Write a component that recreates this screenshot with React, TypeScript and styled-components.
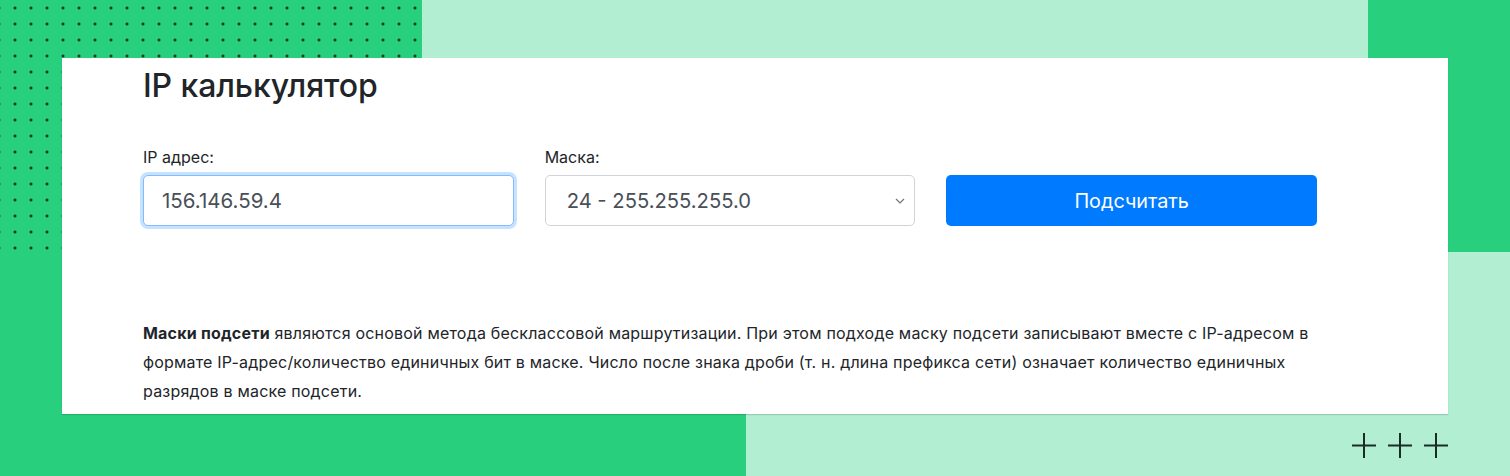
import React from 'react'
import styled, { createGlobalStyle } from 'styled-components'

const GREEN = '#28cf7c'
const MINT = '#b2eed2'

const GlobalStyle = createGlobalStyle`
  body {
    margin: 0;
    font-family: Inter, "Noto Sans", "Liberation Sans", sans-serif;
    color: #212529;
  }
`

const Page = styled.div`
  position: relative;
  width: 1510px;
  height: 476px;
  box-sizing: border-box;
  padding: 58px 62px 0 62px;
  overflow: hidden;
  background:
    linear-gradient(${GREEN}, ${GREEN}) 0 0 / 422px 300px no-repeat,
    linear-gradient(${GREEN}, ${GREEN}) 0 0 / 62px 100% no-repeat,
    linear-gradient(${GREEN}, ${GREEN}) 0 100% / 746px 62px no-repeat,
    linear-gradient(${GREEN}, ${GREEN}) 100% 0 / 142px 252px no-repeat,
    ${MINT};

  &::before {
    content: '';
    position: absolute;
    top: 0;
    left: 0;
    width: 422px;
    height: 256px;
    background-image: radial-gradient(circle, #17392a 1.2px, transparent 1.8px);
    background-size: 16px 16px;
    background-position: 7px 0;
  }
`

const Card = styled.main`
  position: relative;
  z-index: 1;
  height: 356px;
  box-sizing: border-box;
  padding: 9px 131px 0 81px;
  background: #fff;
  box-shadow: 0 1px 1px rgba(0, 0, 0, 0.14);
`

const Title = styled.h1`
  margin: 0;
  font-size: 32px;
  font-weight: 500;
  line-height: 38px;
  letter-spacing: -0.1px;
`

const FormRow = styled.div`
  display: grid;
  grid-template-columns: repeat(3, 1fr);
  column-gap: 31px;
  margin-top: 41px;
  align-items: end;
`

const Field = styled.div`
  display: flex;
  flex-direction: column;
`

const Label = styled.label`
  font-size: 16px;
  line-height: 22px;
  margin-bottom: 7px;
`

const TextInput = styled.input`
  height: 51px;
  box-sizing: border-box;
  padding: 0 18px;
  border: 1px solid #80bdff;
  border-radius: 5px;
  box-shadow: 0 0 0 3px rgba(0, 123, 255, 0.22);
  font-family: inherit;
  font-size: 20.5px;
  color: #495057;
  outline: none;
`

const SelectBox = styled.div`
  height: 51px;
  box-sizing: border-box;
  padding: 0 9px 0 21px;
  display: flex;
  align-items: center;
  justify-content: space-between;
  border: 1px solid #ced4da;
  border-radius: 5px;
  font-size: 20.2px;
  color: #495057;
`

const Button = styled.button`
  height: 51px;
  border: 0;
  border-radius: 5px;
  background: #007bff;
  color: #fff;
  font-family: inherit;
  font-size: 19.8px;
  cursor: pointer;
`

const Text = styled.p`
  margin: 93px -40px 0 0;
  font-size: 16px;
  line-height: 29px;
  letter-spacing: 0.2px;
  white-space: nowrap;
`

const Footer = styled.div`
  height: 62px;
  display: flex;
  justify-content: flex-end;
  align-items: center;
  gap: 12px;
`

const Plus = () => (
  <svg width="24" height="25" viewBox="0 0 24 25">
    <path d="M12 0v25M0 12.5h24" stroke="#1c2b24" strokeWidth="2" fill="none" />
  </svg>
)

const Chevron = () => (
  <svg width="10" height="6" viewBox="0 0 10 6">
    <path d="M1 1l4 4 4-4" stroke="#6c757d" strokeWidth="1.2" fill="none" />
  </svg>
)

export default function App() {
  return (
    <>
      <GlobalStyle />
      <Page>
        <Card>
          <Title>IP калькулятор</Title>
          <FormRow>
            <Field>
              <Label>IP адрес:</Label>
              <TextInput defaultValue="156.146.59.4" />
            </Field>
            <Field>
              <Label>Маска:</Label>
              <SelectBox>
                <span>24 - 255.255.255.0</span>
                <Chevron />
              </SelectBox>
            </Field>
            <Button>Подсчитать</Button>
          </FormRow>
          <Text>
            <b>Маски подсети</b> являются основой метода бесклассовой маршрутизации. При этом
            подходе маску подсети записывают вместе с IP-адресом в
            <br />
            формате IP-адрес/количество единичных бит в маске. Число после знака дроби (т. н.
            длина префикса сети) означает количество единичных
            <br />
            разрядов в маске подсети.
          </Text>
        </Card>
        <Footer>
          <Plus />
          <Plus />
          <Plus />
        </Footer>
      </Page>
    </>
  )
}
